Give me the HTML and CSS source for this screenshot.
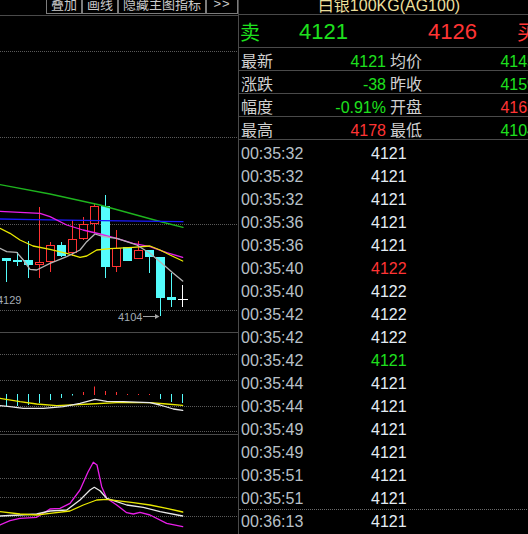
FILE: index.html
```html
<!DOCTYPE html>
<html lang="zh-CN">
<head>
<meta charset="utf-8">
<title>白银100KG(AG100)</title>
<link rel="stylesheet" href="styles.css">
</head>
<body>
<div class="app">
  <section class="chart">
    <div class="toolbar">
      <span class="btn w36">叠加</span>
      <span class="btn w36">画线</span>
      <span class="btn w88">隐藏主图指标</span>
      <span class="btn w32">&gt;&gt;</span>
    </div>
    <svg class="plot" width="238" height="518" viewBox="0 16 238 518">
      <!-- grid -->
      <line class="dot" x1="0" x2="238" y1="51.5" y2="51.5"/>
      <line class="dot" x1="0" x2="238" y1="137.5" y2="137.5"/>
      <line class="dot" x1="0" x2="238" y1="224.5" y2="224.5"/>
      <line class="dot" x1="0" x2="238" y1="310.5" y2="310.5"/>
      <line class="solid" x1="0" x2="238" y1="332.5" y2="332.5"/>
      <line class="dot" x1="0" x2="238" y1="354.5" y2="354.5"/>
      <line class="dot" x1="0" x2="238" y1="380.5" y2="380.5"/>
      <line class="dot" x1="0" x2="238" y1="406.5" y2="406.5"/>
      <line class="dot" x1="0" x2="238" y1="431.5" y2="431.5"/>
      <line class="solid" x1="0" x2="238" y1="434.5" y2="434.5"/>
      <line class="dot" x1="0" x2="238" y1="478.5" y2="478.5"/>
      <line class="dot" x1="0" x2="238" y1="497.5" y2="497.5"/>
      <line class="dot" x1="0" x2="238" y1="516.5" y2="516.5"/>

      <!-- candles -->
      <g class="up">
        <line x1="6.5" x2="6.5" y1="258" y2="282"/><rect x="2" y="258" width="9" height="3"/>
        <line x1="17.5" x2="17.5" y1="252" y2="266"/><rect x="13" y="260" width="9" height="2"/>
        <line x1="28.5" x2="28.5" y1="241" y2="278"/><rect x="24" y="260" width="9" height="5"/>
        <line x1="61.5" x2="61.5" y1="242" y2="257"/><rect x="57" y="245" width="9" height="11"/>
        <line x1="105.5" x2="105.5" y1="195" y2="278"/><rect x="101" y="206" width="9" height="61"/>
        <rect x="123" y="247" width="9" height="14"/>
        <line x1="149.5" x2="149.5" y1="250" y2="273"/><rect x="145" y="250" width="9" height="7"/>
        <line x1="160.5" x2="160.5" y1="257" y2="316"/><rect x="156" y="257" width="9" height="41"/>
        <line x1="171.5" x2="171.5" y1="273" y2="307"/><rect x="167" y="297" width="9" height="3"/>
      </g>
      <g class="down">
        <line x1="39.5" x2="39.5" y1="207" y2="278"/><rect x="35.5" y="262.5" width="8" height="2"/>
        <line x1="50.5" x2="50.5" y1="242" y2="272"/><rect x="46.5" y="245.5" width="8" height="16"/>
        <line x1="72.5" x2="72.5" y1="220" y2="256"/><rect x="68.5" y="239.5" width="8" height="13"/>
        <line x1="83.5" x2="83.5" y1="217" y2="240"/><rect x="79.5" y="224.5" width="8" height="14"/>
        <line x1="94.5" x2="94.5" y1="203" y2="233"/><rect x="90.5" y="206.5" width="8" height="17"/>
        <line x1="116.5" x2="116.5" y1="230" y2="272"/><rect x="112.5" y="248.5" width="8" height="18"/>
        <line x1="138.5" x2="138.5" y1="241" y2="259"/><rect x="134.5" y="250.5" width="8" height="8"/>
      </g>
      <g class="cross">
        <line x1="182.5" x2="182.5" y1="285" y2="307"/>
        <line x1="178" x2="188" y1="299.5" y2="299.5"/>
      </g>

      <!-- moving averages -->
      <polyline class="ma green" points="0,184.7 50,194 100,205 160,221.5 183,227.3"/>
      <polyline class="ma blue" points="0,219 33,219.7 100,220.7 183,221.7"/>
      <polyline class="ma magenta" points="0,211.3 40,213.3 50,216.7 66.7,225 83,230 100,234 116.7,238.3 133,243.3 150,246.7 166.7,252.7 182.7,257.3"/>
      <polyline class="ma yellow" points="0,228.3 10,233.3 20,240 33,246 50,249.3 66.7,253.3 80,257.3 86.7,256 96.7,250 110,248.7 133,247.3 150,246 160,250 170,255 182.7,261"/>
      <polyline class="ma gray" points="0,248.3 6.7,251.7 16.7,252.3 23.3,260 30,269.3 36.7,270 50,263.3 66.7,256.7 80,250 86.7,241.7 95,234 103.3,236.7 116.7,238.3 126.7,241.7 136.7,245 150,253.3 160,261.7 173.3,273.3 182.7,281"/>

      <text class="lbl" x="-3" y="304">4129</text>
      <text class="lbl" x="118" y="320.5">4104</text>
      <line class="arrow" x1="143" x2="156" y1="316.5" y2="316.5"/>
      <polygon class="arrowhead" points="155,314 159.5,316.5 155,319"/>

      <!-- histogram -->
      <g class="bar-up">
        <line x1="6.5" x2="6.5" y1="394" y2="406"/>
        <line x1="17.5" x2="17.5" y1="394" y2="406"/>
        <line x1="28.5" x2="28.5" y1="394" y2="405"/>
        <line x1="39.5" x2="39.5" y1="394" y2="403"/>
        <line x1="50.5" x2="50.5" y1="394" y2="400"/>
        <line x1="61.5" x2="61.5" y1="394" y2="398"/>
        <line x1="72.5" x2="72.5" y1="394" y2="395.5"/>
        <line x1="160.5" x2="160.5" y1="394" y2="399"/>
        <line x1="171.5" x2="171.5" y1="394" y2="402"/>
        <line x1="182.5" x2="182.5" y1="394" y2="403"/>
      </g>
      <g class="bar-down">
        <line x1="83.5" x2="83.5" y1="392" y2="395"/>
        <line x1="94.5" x2="94.5" y1="386.5" y2="395"/>
        <line x1="105.5" x2="105.5" y1="391" y2="395"/>
        <line x1="116.5" x2="116.5" y1="392" y2="395"/>
        <line x1="127.5" x2="127.5" y1="394" y2="395"/>
        <line x1="138.5" x2="138.5" y1="394" y2="395"/>
        <line x1="149.5" x2="149.5" y1="394" y2="395"/>
      </g>
      <polyline class="ma yellow" points="0,398.3 20,401.7 36.7,404 56.7,405.7 90,404 116.7,402.7 150,402.7 166.7,404 182.7,405.3"/>
      <polyline class="ma white" points="0,405.7 10,406.7 23.3,408.3 43.3,408.3 63.3,406.7 80,403.3 95,399.3 106.7,401.3 123.3,401.7 150,402.7 160,405 173.3,409 182.7,410.3"/>

      <!-- oscillator -->
      <polyline class="ma magenta" points="0,525 10,520.7 20,518.3 36.7,517.3 50,509 60,508.3 70,503.3 80,490 88,472 93.3,462.3 97,465 101.7,486.7 106.7,498.3 116.7,505 126.7,512.7 133.3,514 140,512.3 150,515 166.7,523.3 182.7,526.7"/>
      <polyline class="ma white" points="0,516 20,515 36.7,514 50,511 66.7,510 80,500 90,490 94.3,487.3 100,490.7 106.7,498.3 116.7,501.7 126.7,505 143.3,507.3 160,511.7 182.7,516"/>
      <polyline class="ma yellow" points="0,511.7 20,514 36.7,515 50,513.3 70,511 83.3,505 96.7,500 106.7,499.3 116.7,500.7 133.3,502.7 150,505 166.7,508.3 182.7,512"/>
    </svg>
  </section>

  <section class="quote">
    <div class="title">白银100KG(AG100)</div>
    <div class="bidask">
      <span class="side g">卖</span>
      <span class="bp g">4121</span>
      <span class="ap r">4126</span>
      <span class="side r">买</span>
    </div>
    <div class="info">
      <div class="row">
        <div class="cell c1"><span>最新</span><span class="g">4121</span></div>
        <div class="cell c2"><span>均价</span><span class="g">4145</span></div>
      </div>
      <div class="row">
        <div class="cell c1"><span>涨跌</span><span class="g">-38</span></div>
        <div class="cell c2"><span>昨收</span><span class="g">4159</span></div>
      </div>
      <div class="row">
        <div class="cell c1"><span>幅度</span><span class="g">-0.91%</span></div>
        <div class="cell c2"><span>开盘</span><span class="r">4163</span></div>
      </div>
      <div class="row">
        <div class="cell c1"><span>最高</span><span class="r">4178</span></div>
        <div class="cell c2"><span>最低</span><span class="g">4104</span></div>
      </div>
    </div>
    <ul class="ticks">
      <li><span class="time">00:35:32</span><span class="price">4121</span></li>
      <li><span class="time">00:35:32</span><span class="price">4121</span></li>
      <li><span class="time">00:35:32</span><span class="price">4121</span></li>
      <li><span class="time">00:35:36</span><span class="price">4121</span></li>
      <li><span class="time">00:35:36</span><span class="price">4121</span></li>
      <li><span class="time">00:35:40</span><span class="price r">4122</span></li>
      <li><span class="time">00:35:40</span><span class="price">4122</span></li>
      <li><span class="time">00:35:42</span><span class="price">4122</span></li>
      <li><span class="time">00:35:42</span><span class="price">4122</span></li>
      <li><span class="time">00:35:42</span><span class="price g">4121</span></li>
      <li><span class="time">00:35:44</span><span class="price">4121</span></li>
      <li><span class="time">00:35:44</span><span class="price">4121</span></li>
      <li><span class="time">00:35:49</span><span class="price">4121</span></li>
      <li><span class="time">00:35:49</span><span class="price">4121</span></li>
      <li><span class="time">00:35:51</span><span class="price">4121</span></li>
      <li><span class="time">00:35:51</span><span class="price">4121</span></li>
      <li class="sep"><span class="time">00:36:13</span><span class="price">4121</span></li>
    </ul>
  </section>
</div>
</body>
</html>
```

FILE: styles.css
```css
* {
  box-sizing: border-box;
  margin: 0;
  padding: 0;
}

html,
body {
  background: #000;
}

body {
  width: 528px;
  height: 534px;
  overflow: hidden;
  font-family: "Liberation Sans", "Noto Sans CJK SC", sans-serif;
}

.app {
  display: flex;
  height: 534px;
}

/* ---------- chart column ---------- */
.chart {
  flex: none;
  width: 238px;
  display: flex;
  flex-direction: column;
}

.toolbar {
  height: 16px;
  border-bottom: 1px solid #4a4a4a;
  display: flex;
  justify-content: flex-end;
  align-items: flex-start;
}

.btn {
  height: 18px;
  margin-top: -4px;
  border: 1px solid #7c7c7c;
  color: #cacaca;
  font: 13px/14px "Noto Sans CJK SC", sans-serif;
  text-align: center;
  white-space: nowrap;
}

.w36 { width: 36px; }
.w88 { width: 88px; }
.w32 { width: 32px; font-family: "Liberation Sans", sans-serif; letter-spacing: 1px; }

.plot {
  display: block;
}

.dot {
  stroke: #5a5a5a;
  stroke-width: 1;
  stroke-dasharray: 1 1;
}

.solid {
  stroke: #4a4a4a;
  stroke-width: 1;
}

.up line { stroke: #54fcfc; stroke-width: 1; }
.up rect { fill: #54fcfc; }
.down line { stroke: #ff3232; stroke-width: 1; }
.down rect { fill: #000; stroke: #ff3232; stroke-width: 1; }
.cross line { stroke: #ffffff; stroke-width: 1; }

.ma {
  fill: none;
  stroke-width: 1.3;
  stroke-linejoin: round;
  stroke-linecap: round;
}
.ma.green { stroke: #1eb41e; }
.ma.blue { stroke: #1a1aff; }
.ma.magenta { stroke: #e81ee8; }
.ma.yellow { stroke: #e8e800; }
.ma.gray { stroke: #b4b4b4; }
.ma.white { stroke: #e8e8e8; }

.lbl {
  fill: #a4acb4;
  font: 11px "Liberation Sans", sans-serif;
}
.arrow { stroke: #a4a4a4; stroke-width: 1; }
.arrowhead { fill: #a4a4a4; }

.bar-up line { stroke: #54fcfc; stroke-width: 1; }
.bar-down line { stroke: #ff3232; stroke-width: 1; }

/* ---------- quote panel ---------- */
.quote {
  flex: none;
  width: 301px;
  border-left: 1px solid #4a4a4a;
  color: #d0d0d0;
}

.g { color: #1ee01e; }
.r { color: #ff3434; }

.title {
  height: 15px;
  border-bottom: 1px solid #4a4a4a;
  text-align: center;
  color: #ecdf9c;
  font-size: 16px;
  line-height: 12px;
  white-space: nowrap;
  overflow: hidden;
}

.bidask {
  height: 33px;
  padding: 1px 0 0 1px;
  border-bottom: 1px solid #4a4a4a;
  display: flex;
  font-size: 22px;
  line-height: 31px;
  white-space: nowrap;
  overflow: hidden;
}
.bidask span { flex: none; }
.bidask .side { width: 59px; font-family: "Noto Sans CJK SC", sans-serif; font-size: 20px; }
.bidask .bp { width: 129px; }
.bidask .ap { width: 89px; }

.info .row {
  height: 23px;
  border-bottom: 1px solid #4a4a4a;
  display: flex;
  gap: 4px;
  padding-top: 5px;
  font-size: 16px;
  line-height: 18px;
  white-space: nowrap;
}

.cell {
  flex: none;
  display: flex;
  justify-content: space-between;
}
.c1 { width: 147px; padding-left: 2px; }
.c2 { width: 146px; }

.ticks {
  list-style: none;
  padding-top: 1px;
}

.ticks li {
  height: 23px;
  padding-top: 4px;
  display: flex;
  font-size: 16px;
  line-height: 18px;
  white-space: nowrap;
}

.ticks li.sep {
  border-top: 1px dotted #6a6a6a;
  padding-top: 3px;
}

.time {
  flex: none;
  width: 132px;
  padding-left: 2px;
  color: #b8c0c8;
}

.price {
  color: #e4ecf4;
}
.price.r { color: #ff3434; }
.price.g { color: #1ee01e; }
```
